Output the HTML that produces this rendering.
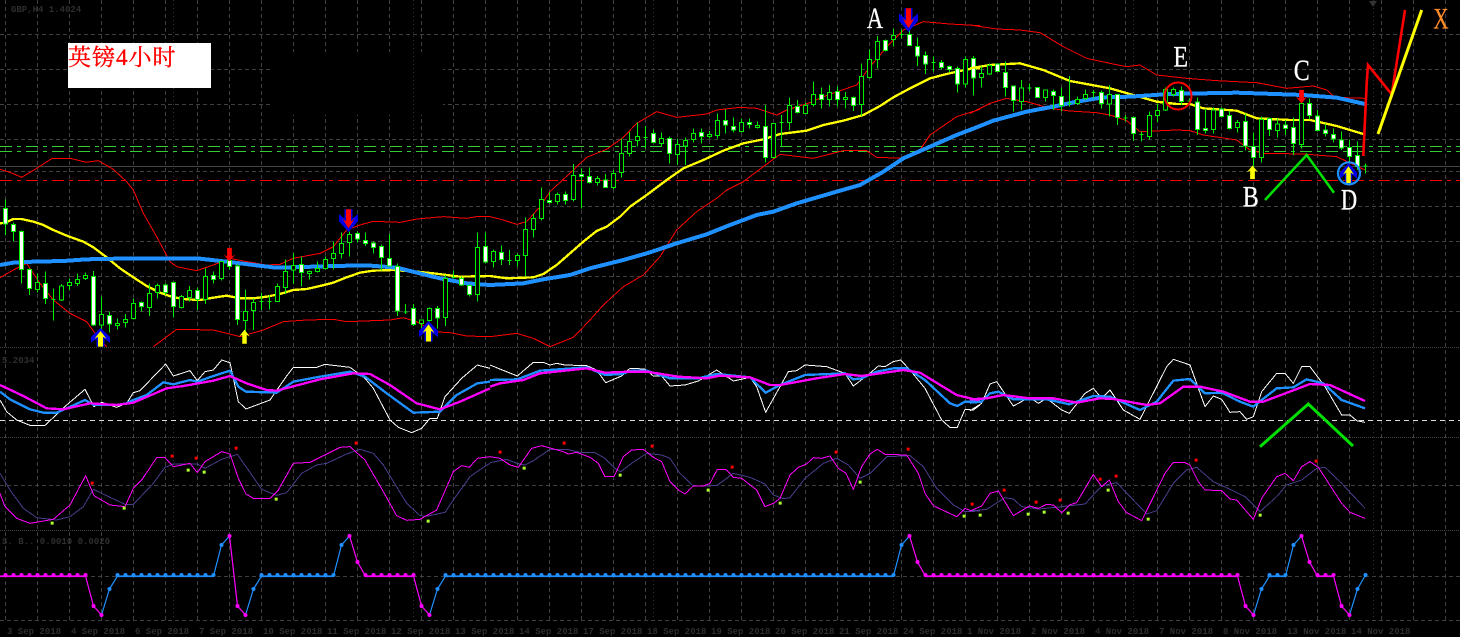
<!DOCTYPE html>
<html><head><meta charset="utf-8"><title>GBP H4</title>
<style>
html,body{margin:0;padding:0;background:#000;width:1460px;height:637px;overflow:hidden}
svg{display:block}
.n{fill:none;stroke-linejoin:round;shape-rendering:crispEdges}
.r{stroke:#f00;stroke-width:3}
.y{stroke:#ffff00;stroke-width:7}
.b{stroke:#1e90ff;stroke-width:12}
.w{stroke:#fff;stroke-width:3}
.bt{stroke:#1e90ff;stroke-width:7}
.m{stroke:#ff00ff;stroke-width:7}
.mt{stroke:#ff00ff;stroke-width:3}
.s{stroke:#483d8b;stroke-width:3}
.l{font:bold 9px "Liberation Mono",monospace;fill:#2e2e2e}
.t{font-family:"Liberation Serif",serif;font-size:30px;fill:#fff;text-anchor:middle;stroke:#fff;stroke-width:.3}
</style></head>
<body>
<svg width="1460" height="637" viewBox="0 0 1460 637" xmlns="http://www.w3.org/2000/svg">
<defs>
<pattern id="vg" x="5" y="0" width="32" height="7" patternUnits="userSpaceOnUse"><rect width="1" height="4" fill="#404040"/></pattern>
<g id="ub"><polygon fill="#0000e8" points="0,0 9.5,9 9.5,15 4,11 4,19 -4,19 -4,11 -9.5,15 -9.5,9"/></g>
<polygon id="uy" fill="#ffff00" points="0,3 6,11 2.5,9 2.5,19 -2.5,19 -2.5,9 -6,11"/>
<polygon id="ur" fill="#ff0000" points="0,3 6,11 2.5,9 2.5,19 -2.5,19 -2.5,9 -6,11"/>
</defs>
<rect width="1460" height="637" fill="#000"/>
<!-- grid -->
<rect x="0" y="0" width="1460" height="620" fill="url(#vg)"/>
<path d="M0 34.5H1460M0 69.5H1460M0 104.5H1460M0 139.5H1460M0 171.5H1460M0 206.5H1460M0 241.5H1460M0 276.5H1460M0 311.5H1460M0 485.5H1460M0 576.5H1460M0 620.5H1460" stroke="#404040" stroke-dasharray="4 3" fill="none"/>
<rect x="271" y="52" width="172" height="63" fill="#000"/>
<path d="M173.5 0V620M413.5 0V620M653.5 0V620M893.5 0V620M1133.5 0V620M1373.5 0V620" stroke="#333" stroke-dasharray="1 3" fill="none"/>
<path d="M0 347.5H1460M0 437.5H1460M0 530.5H1460" stroke="#444" stroke-dasharray="1 1" fill="none"/>
<!-- horizontal levels -->
<path d="M0 146.5H1460M0 151.5H1460" stroke="#32cd32" stroke-dasharray="12 5 4 5" fill="none"/>
<path d="M0 166.5H1460" stroke="#444" fill="none"/>
<path d="M0 180.5H1460" stroke="#f00" stroke-dasharray="12 5 4 5" fill="none"/>
<path d="M0 420.5H1460" stroke="#ddd" stroke-dasharray="5 4" fill="none"/>

<!-- top labels -->
<text class="l" x="11" y="12">GBP,H4 1.4024</text>
<text class="l" x="2" y="363">5.2034</text>
<text class="l" x="2" y="544">S. B.. 0.0010 0.0020</text>
<polygon points="1369,1 1377,1 1373,7" fill="#333"/>

<!-- main chart, zoom 1 -->
<g transform="scale(.33333)">
<clipPath id="c1"><rect x="0" y="0" width="1480" height="1042"/></clipPath>
<g clip-path="url(#c1)">
<polyline class="n r" points="0,508 30,517 65,532 110,505 155,476 210,475 260,487 295,482 340,508 380,545 400,570 430,640 470,710 510,785 530,800 590,812 640,795 690,775 740,785 800,795 840,793 880,775 960,760 1000,740 1040,690 1080,675 1120,664 1200,667 1250,657 1330,650 1400,655 1430,650 1470,650"/>
<polyline class="n r" points="0,833 40,810 80,790 120,850 160,900 210,940 260,965 300,1020 320,1040"/>
<polyline class="n r" points="460,1040 530,988 640,990 720,1010 790,990 850,965 920,960 1000,958 1040,965 1170,960 1210,953 1250,965 1300,995 1350,998 1400,1008 1470,1010"/>
</g>
<polyline class="n y" points="0,670 16,668 40,657 64,657 100,665 130,675 160,690 200,707 250,725 280,742 320,772 360,805 400,832 440,858 480,878 520,892 560,898 600,900 640,893 680,887 720,895 760,895 800,890 840,882 880,870 920,867 960,858 1000,848 1040,832 1080,818 1120,812 1180,810 1250,815 1300,820 1380,830 1470,828"/>
<polyline class="n b" points="0,795 40,788 100,785 190,783 260,778 400,775 600,776 680,785 760,795 820,802 880,802 1000,798 1100,796 1190,803 1250,818 1320,835 1400,850 1470,855"/>
<path fill="none" stroke="#00ee00" stroke-width="3" shape-rendering="crispEdges" d="M16.5 598V705M40.5 668V725M64.5 692V850M88.5 805V885M112.5 820V878M136.5 815V912M160.5 865V962M154 898h13M184.5 852V903M208.5 835V870M232.5 820V858M256.5 817V840M280.5 813V978M304.5 890V990M328.5 935V998M352.5 955V988M376.5 942V982M400.5 895V958M424.5 905V935M448.5 850V948M472.5 850V895M496.5 850V885M520.5 845V953M544.5 885V925M568.5 858V905M592.5 862V930M616.5 805V912M640.5 815V850M664.5 785V842M688.5 775V808M712.5 792V975M736.5 868V1018M760.5 895V990M784.5 878V930M778 905h13M808.5 885V928M802 905h13M832.5 850V905M856.5 778V882M880.5 760V852M904.5 770V860M928.5 812V838M952.5 785V818M976.5 770V808M1000.5 725V808M1024.5 697V775M1048.5 695V770M1072.5 695V728M1096.5 697V738M1120.5 725V760M1144.5 733V812M1168.5 702V800M1192.5 790V948M1216.5 912V942M1210 936h13M1240.5 912V978M1264.5 958V990M1288.5 922V965M1312.5 918V985M1336.5 825V978M1360.5 812V835M1354 833h13M1384.5 830V858M1408.5 853V890M1432.5 697V905M1456.5 698V790"/>
<path fill="#000" stroke="#00ee00" stroke-width="3" shape-rendering="crispEdges" d="M106.5 847h12v21h-12zM178.5 858h12v42h-12zM202.5 848h12v8h-12zM226.5 838h12v13h-12zM250.5 826h12v9h-12zM298.5 943h12v32h-12zM346.5 970h12v6h-12zM370.5 958h12v10h-12zM394.5 910h12v46h-12zM442.5 880h12v43h-12zM466.5 856h12v21h-12zM538.5 890h12v32h-12zM562.5 871h12v22h-12zM610.5 829h12v69h-12zM658.5 785h12v50h-12zM730.5 935h12v27h-12zM754.5 907h12v25h-12zM826.5 860h12v45h-12zM850.5 815h12v47h-12zM874.5 797h12v13h-12zM922.5 815h12v5h-12zM946.5 806h12v9h-12zM970.5 778h12v27h-12zM994.5 760h12v15h-12zM1018.5 730h12v30h-12zM1042.5 703h12v24h-12zM1258.5 960h12v10h-12zM1282.5 926h12v36h-12zM1330.5 836h12v116h-12zM1426.5 742h12v142h-12z"/>
<path fill="#fff" stroke="#00ee00" stroke-width="3" shape-rendering="crispEdges" d="M10.5 625h12v47h-12zM34.5 673h12v21h-12zM58.5 695h12v113h-12zM82.5 808h12v57h-12zM130.5 850h12v46h-12zM274.5 830h12v145h-12zM322.5 946h12v26h-12zM418.5 908h12v11h-12zM490.5 855h12v22h-12zM514.5 848h12v71h-12zM586.5 871h12v27h-12zM634.5 827h12v11h-12zM682.5 782h12v18h-12zM706.5 798h12v160h-12zM898.5 794h12v24h-12zM1066.5 701h12v16h-12zM1090.5 722h12v8h-12zM1114.5 729h12v13h-12zM1138.5 740h12v32h-12zM1162.5 776h12v22h-12zM1186.5 800h12v133h-12zM1234.5 926h12v47h-12zM1306.5 926h12v28h-12zM1378.5 836h12v19h-12zM1402.5 857h12v26h-12zM1450.5 740h12v46h-12z"/>
</g>

<!-- main chart, zoom 2 -->
<g transform="translate(490,0) scale(.33333)">
<polyline class="n r" points="0,650 40,660 80,673 110,665 150,620 180,575 250,510 290,472 350,448 400,412 440,370 500,335 560,352 650,342 680,330 750,322 800,325 860,345 890,330 960,308 1000,290 1100,255 1140,200 1200,130 1240,90 1300,65 1380,72 1470,77"/>
<polyline class="n r" points="0,1010 80,1000 130,1015 180,1040 250,1012 300,960 340,915 400,860 460,825 510,770 560,690 620,635 680,595 710,570 760,545 820,500 870,463 970,475 1060,452 1130,452 1160,472 1240,475 1290,450 1320,405 1400,350 1470,328"/>
<polyline class="n y" points="0,828 50,835 130,832 160,822 200,795 240,760 280,725 320,693 350,680 390,650 420,620 470,585 530,540 580,505 640,480 700,452 760,430 820,418 870,402 950,392 1000,375 1060,362 1120,345 1170,318 1210,292 1260,265 1320,235 1370,222 1400,215 1450,205 1470,205"/>
<polyline class="n b" points="0,855 100,850 160,838 240,825 300,805 400,780 480,757 560,730 650,703 720,675 800,645 850,635 920,610 1040,575 1110,555 1180,515 1240,475 1320,440 1400,405 1470,378"/>
<path fill="none" stroke="#00ee00" stroke-width="3" shape-rendering="crispEdges" d="M10.5 748V803M34.5 737V795M58.5 750V795M52 781h13M82.5 760V800M106.5 652V830M130.5 640V713M154.5 562V662M178.5 576V610M202.5 578V614M226.5 575V613M250.5 492V605M274.5 505V626M298.5 502V550M322.5 528V557M346.5 522V563M370.5 510V568M394.5 415V533M418.5 396V470M442.5 367V440M466.5 378V445M460 412h13M490.5 388V430M514.5 397V440M538.5 410V491M562.5 415V495M586.5 412V495M610.5 385V428M634.5 385V430M658.5 393V416M682.5 340V415M706.5 328V400M730.5 352V398M754.5 355V398M778.5 355V385M802.5 365V385M826.5 315V487M850.5 370V475M874.5 345V440M868 368h13M898.5 292V390M922.5 300V340M946.5 308V342M970.5 244V320M994.5 262V325M1018.5 255V320M1042.5 260V320M1066.5 276V325M1090.5 290V333M1114.5 190V348M1138.5 148V235M1162.5 108V205M1186.5 118V155M1210.5 85V140M1234.5 88V115M1228 103h13M1258.5 48V137M1282.5 113V198M1306.5 155V222M1330.5 170V215M1324 188h13M1354.5 180V208M1378.5 196V218M1402.5 200V278M1426.5 170V262M1450.5 168V287"/>
<path fill="#000" stroke="#00ee00" stroke-width="3" shape-rendering="crispEdges" d="M4.5 755h12v30h-12zM76.5 767h12v15h-12zM100.5 688h12v79h-12zM124.5 655h12v33h-12zM148.5 598h12v58h-12zM196.5 583h12v22h-12zM244.5 526h12v73h-12zM316.5 535h12v13h-12zM364.5 520h12v43h-12zM388.5 460h12v58h-12zM412.5 424h12v36h-12zM436.5 410h12v12h-12zM508.5 416h12v15h-12zM556.5 434h12v30h-12zM580.5 422h12v16h-12zM604.5 401h12v17h-12zM652.5 404h12v5h-12zM676.5 361h12v46h-12zM748.5 367h12v27h-12zM796.5 376h12v6h-12zM844.5 371h12v101h-12zM892.5 317h12v50h-12zM940.5 316h12v24h-12zM964.5 283h12v31h-12zM1012.5 278h12v20h-12zM1060.5 292h12v6h-12zM1108.5 230h12v83h-12zM1132.5 178h12v54h-12zM1156.5 124h12v54h-12zM1204.5 106h12v12h-12zM1420.5 178h12v74h-12z"/>
<path fill="#fff" stroke="#00ee00" stroke-width="3" shape-rendering="crispEdges" d="M28.5 758h12v20h-12zM172.5 601h12v6h-12zM220.5 583h12v18h-12zM268.5 524h12v5h-12zM292.5 530h12v18h-12zM340.5 540h12v22h-12zM484.5 401h12v27h-12zM532.5 416h12v44h-12zM628.5 398h12v11h-12zM700.5 362h12v13h-12zM724.5 380h12v10h-12zM772.5 368h12v5h-12zM820.5 380h12v92h-12zM916.5 320h12v17h-12zM988.5 284h12v14h-12zM1036.5 274h12v24h-12zM1084.5 292h12v24h-12zM1180.5 121h12v31h-12zM1252.5 103h12v33h-12zM1276.5 140h12v28h-12zM1300.5 166h12v26h-12zM1348.5 187h12v15h-12zM1372.5 200h12v8h-12zM1396.5 206h12v46h-12zM1444.5 175h12v59h-12z"/>
</g>

<!-- main chart, zoom 3 -->
<g transform="translate(970,0) scale(.33333)">
<polyline class="n r" points="0,75 80,87 150,90 210,98 280,140 350,175 420,190 470,200 510,195 560,225 650,235 740,242 860,248 950,265 1030,258 1070,270 1095,292 1185,295"/>
<polyline class="n r" points="0,340 60,310 110,295 170,305 240,325 300,333 380,338 420,345 470,362 510,395 620,390 660,392 700,405 800,420 840,450 880,460 1000,462 1100,470 1185,510"/>
<polyline class="n y" points="0,205 60,195 150,190 220,210 300,243 420,265 490,285 560,305 620,312 660,312 700,325 800,332 860,355 960,360 1020,360 1100,378 1180,402"/>
<polyline class="n b" points="0,390 70,362 170,335 260,318 320,305 400,292 480,290 600,282 800,278 1000,285 1100,293 1185,312"/>
<path fill="none" stroke="#00ee00" stroke-width="3" shape-rendering="crispEdges" d="M34.5 200V262M58.5 190V225M82.5 190V215M106.5 185V290M130.5 258V335M154.5 240V330M178.5 250V275M172 264h13M202.5 262V294M226.5 268V305M250.5 268V330M274.5 262V335M298.5 228V320M292 311h13M322.5 290V315M346.5 268V300M370.5 270V295M364 277h13M394.5 272V326M418.5 255V350M442.5 283V375M466.5 345V365M460 354h13M490.5 350V423M514.5 395V425M508 404h13M538.5 335V418M562.5 310V366M586.5 262V333M610.5 262V290M634.5 260V315M658.5 295V310M652 303h13M682.5 292V405M706.5 327V400M730.5 322V400M754.5 322V352M778.5 333V388M802.5 360V398M826.5 340V452M850.5 398V500M874.5 350V488M898.5 352V408M922.5 355V412M946.5 360V405M970.5 352V465M994.5 290V445M1018.5 295V358M1042.5 330V395M1066.5 370V410M1090.5 385V428M1114.5 395V450M1138.5 418V490M1162.5 425V510M1186.5 490V520M1180 498h13"/>
<path fill="#000" stroke="#00ee00" stroke-width="3" shape-rendering="crispEdges" d="M28.5 220h12v13h-12zM52.5 196h12v26h-12zM148.5 264h12v41h-12zM220.5 270h12v22h-12zM316.5 298h12v12h-12zM340.5 283h12v13h-12zM412.5 284h12v28h-12zM532.5 346h12v64h-12zM556.5 332h12v15h-12zM580.5 268h12v62h-12zM604.5 268h12v15h-12zM724.5 330h12v58h-12zM796.5 368h12v14h-12zM868.5 358h12v114h-12zM916.5 372h12v20h-12zM988.5 310h12v124h-12z"/>
<path fill="#fff" stroke="#00ee00" stroke-width="3" shape-rendering="crispEdges" d="M76.5 192h12v22h-12zM100.5 217h12v45h-12zM124.5 258h12v44h-12zM196.5 263h12v29h-12zM244.5 275h12v11h-12zM268.5 290h12v26h-12zM388.5 278h12v32h-12zM436.5 284h12v68h-12zM484.5 353h12v47h-12zM628.5 272h12v32h-12zM676.5 306h12v82h-12zM700.5 385h12v6h-12zM748.5 327h12v23h-12zM772.5 347h12v39h-12zM820.5 365h12v73h-12zM844.5 440h12v32h-12zM892.5 356h12v32h-12zM940.5 375h12v10h-12zM964.5 382h12v48h-12zM1012.5 310h12v36h-12zM1036.5 348h12v44h-12zM1060.5 390h12v10h-12zM1084.5 403h12v14h-12zM1108.5 420h12v24h-12zM1132.5 442h12v28h-12zM1156.5 466h12v34h-12z"/>
</g>

<!-- arrows -->
<g transform="translate(100.5,328) scale(1,.98)"><use href="#ub"/><use href="#uy"/></g>
<g transform="translate(244.5,327) scale(.9,.88)"><use href="#uy"/></g>
<g transform="translate(428.5,321) scale(1,1.08)"><use href="#ub"/><use href="#uy"/></g>
<g transform="translate(348.5,232) scale(1,-1.2)"><use href="#ub"/><use href="#ur"/></g>
<g transform="translate(229.5,264) scale(.95,-.85)"><use href="#ur"/></g>
<g transform="translate(908.5,32) scale(1,-1.25)"><use href="#ub"/><use href="#ur"/></g>
<g transform="translate(1252.5,163) scale(.95,.85)"><use href="#uy"/></g>
<g transform="translate(1301.5,106) scale(.95,-.85)"><use href="#ur"/></g>
<g transform="translate(1348.5,163) scale(.9,1.05)"><use href="#ub"/><use href="#uy"/></g>

<!-- annotations -->
<circle cx="1178" cy="96" r="13.5" fill="none" stroke="#f00" stroke-width="2"/>
<circle cx="1349" cy="173.3" r="11" fill="none" stroke="#1e90ff" stroke-width="2.2"/>
<polyline fill="none" stroke="#00e000" stroke-width="2.6" points="1265,200 1306.7,155 1334,192.7"/>
<polyline fill="none" stroke="#f00" stroke-width="2.6" points="1363.3,156 1366.7,83 1368,65 1391.7,94.3 1405,10"/>
<polyline fill="none" stroke="#ffff00" stroke-width="3" points="1378,134 1421.7,10"/>
<text class="t" transform="translate(875,28) scale(.75,1)" x="0" y="0">A</text>
<text class="t" transform="translate(1180.7,66.7) scale(.8,1)" x="0" y="0">E</text>
<text class="t" transform="translate(1301.7,80) scale(.8,1)" x="0" y="0">C</text>
<text class="t" transform="translate(1250.7,206.7) scale(.8,1)" x="0" y="0">B</text>
<text class="t" transform="translate(1349,209.3) scale(.75,1)" x="0" y="0">D</text>
<text class="t" style="fill:#ff8c2a;stroke:#ff8c2a" transform="translate(1441,28.3) scale(.7,1)" x="0" y="0">X</text>

<!-- title box -->
<rect x="68" y="43" width="143" height="45" fill="#fff"/>
<text x="68" y="65" fill="#f00" stroke="#f00" stroke-width=".35" style="font-family:'Liberation Serif','Noto Serif CJK SC',serif;font-size:23px;letter-spacing:1px">英镑4小时</text>

<!-- indicator 1,2 zoom 4 -->
<g transform="translate(0,350) scale(.33333)">
<polyline class="n w" points="0,150 20,185 50,210 90,226 135,226 200,165 255,118 282,170 305,157 350,172 380,160 400,128 420,122 497,42 520,78 570,62 592,92 615,65 640,60 665,30 690,38 715,155 738,177 810,150 860,78 880,52 950,52 975,43 1050,52 1095,85 1120,115 1170,210 1195,232 1235,248 1265,235 1290,205 1312,205 1335,140 1385,85 1432,45 1470,55"/>
<polyline class="n bt" points="0,125 30,148 90,178 130,188 170,188 200,175 255,150 282,165 350,165 380,160 400,150 440,135 490,97 520,103 570,90 592,95 640,78 690,62 715,110 738,125 830,128 880,95 960,80 1050,65 1095,80 1160,130 1240,188 1320,185 1370,135 1432,100 1470,95"/>
<polyline class="n m" points="0,105 70,138 140,175 190,178 270,160 350,165 400,158 500,115 550,108 640,92 690,78 740,100 800,120 830,122 960,88 1060,70 1110,72 1170,105 1250,160 1320,178 1380,155 1470,115"/>
<polyline class="n s" points="0,370 30,420 70,475 110,503 170,510 210,500 250,470 280,418 330,442 375,463 400,463 460,400 495,352 520,342 592,342 615,355 665,328 712,313 745,360 785,418 830,436 860,428 905,370 950,345 980,340 1040,312 1080,298 1120,310 1150,345 1220,460 1260,497 1285,498 1335,487 1360,450 1410,380 1450,352 1470,340"/>
<polyline class="n mt" points="0,430 15,470 50,505 90,520 160,508 210,465 257,377 282,437 330,465 375,470 400,415 425,390 470,323 495,323 520,350 570,340 592,368 615,335 665,305 690,312 715,385 738,432 760,445 810,445 835,420 880,340 930,337 1020,292 1050,290 1095,330 1150,425 1190,497 1220,511 1260,508 1310,480 1360,365 1385,347 1408,352 1432,325 1470,320"/>
<path fill="#f00" d="M272 395h9v9h-9zM512 314h9v9h-9zM584 320h9v9h-9zM704 290h9v9h-9zM1064 275h9v9h-9z"/>
<path fill="#adff2f" d="M152 515h9v9h-9zM368 470h9v9h-9zM560 356h9v9h-9zM608 362h9v9h-9zM824 443h9v9h-9zM1280 509h9v9h-9z"/>
</g>
<!-- zoom 5 -->
<g transform="translate(490,350) scale(.33333)">
<polyline class="n w" points="0,45 82,78 130,37 160,37 180,45 200,40 225,45 290,47 320,60 347,98 395,78 420,55 465,57 490,78 515,78 540,108 585,105 625,93 680,60 730,93 780,82 800,110 827,187 870,110 895,65 920,62 945,45 1010,50 1065,70 1090,108 1140,70 1165,48 1185,50 1210,35 1232,30 1260,60 1305,115 1355,210 1380,232 1402,232 1425,178 1450,180 1470,165"/>
<polyline class="n bt" points="0,90 82,88 150,62 290,52 345,75 395,72 425,62 470,62 540,85 625,85 680,72 780,82 827,128 870,105 945,75 1065,70 1090,88 1115,85 1160,65 1210,55 1250,55 1305,90 1380,160 1402,168 1425,155 1470,155"/>
<polyline class="n m" points="0,110 30,100 100,90 150,70 290,55 345,68 420,65 470,65 565,80 650,85 690,77 780,82 840,105 870,105 980,85 1065,72 1115,78 1240,60 1290,68 1400,135 1470,152"/>
<polyline class="n s" points="0,338 50,328 80,340 105,345 130,332 180,298 230,298 270,307 315,308 345,325 375,355 392,365 425,340 470,310 515,315 540,325 570,370 610,408 680,407 730,370 780,382 825,402 850,435 880,446 900,443 945,385 1000,340 1040,325 1075,345 1110,385 1140,370 1190,320 1260,317 1300,350 1340,415 1390,465 1425,485 1470,483"/>
<polyline class="n mt" points="0,320 30,325 60,345 85,352 125,295 155,287 220,305 235,312 260,307 300,322 325,340 345,380 372,380 400,320 425,300 460,298 490,322 515,335 540,395 565,420 585,432 610,408 640,408 660,400 682,358 708,358 730,382 755,385 800,420 825,470 850,460 870,445 900,375 925,352 950,342 970,323 995,325 1020,318 1045,355 1068,370 1090,418 1115,350 1140,312 1162,298 1185,313 1250,315 1285,370 1305,430 1330,467 1400,500 1425,475 1445,483 1470,480"/>
<path fill="#f00" d="M26 302h9v9h-9zM218 275h9v9h-9zM482 284h9v9h-9zM722 347h9v9h-9zM1034 302h9v9h-9zM1250 293h9v9h-9zM1442 458h9v9h-9z"/>
<path fill="#adff2f" d="M98 350h9v9h-9zM386 371h9v9h-9zM650 416h9v9h-9zM866 455h9v9h-9zM1106 392h9v9h-9zM1418 494h9v9h-9z"/>
</g>
<!-- zoom 6 -->
<g transform="translate(970,350) scale(.33333)">
<polyline class="n w" points="0,182 35,160 60,102 80,95 130,168 178,142 205,160 230,145 275,180 298,190 345,130 370,115 395,145 420,120 460,180 510,208 590,50 610,28 660,45 705,170 730,138 755,148 780,187 810,185 830,208 850,200 875,125 920,70 945,70 970,100 995,50 1020,50 1065,110 1115,195 1140,195 1160,212 1185,217"/>
<polyline class="n bt" points="0,158 35,155 60,130 85,125 130,148 178,148 230,148 298,163 370,138 420,140 510,180 560,155 610,92 660,87 705,130 755,128 810,155 850,170 875,150 920,115 970,112 1010,88 1060,100 1115,150 1185,175"/>
<polyline class="n m" points="0,148 50,145 100,135 178,145 250,145 320,158 390,145 430,147 530,165 570,160 640,110 690,110 760,125 840,155 880,155 1020,102 1080,105 1185,153"/>
<polyline class="n s" points="0,483 50,478 105,443 130,447 155,470 205,477 275,470 345,462 395,408 440,398 490,450 530,492 560,482 610,400 650,360 680,352 730,395 780,418 825,440 870,485 920,440 950,405 995,390 1040,355 1065,352 1115,400 1185,475"/>
<polyline class="n mt" points="0,483 35,468 60,430 85,423 130,497 178,468 205,475 230,463 250,465 275,488 298,465 320,458 370,373 395,410 418,390 445,455 470,488 515,512 585,370 610,337 645,338 660,345 685,395 705,420 755,422 780,447 800,450 850,508 875,445 920,380 945,370 970,392 995,350 1020,335 1045,352 1115,460 1140,487 1185,505"/>
<path fill="#f00" d="M98 416h9v9h-9zM194 452h9v9h-9zM266 446h9v9h-9zM386 383h9v9h-9zM434 374h9v9h-9zM674 326h9v9h-9zM1034 329h9v9h-9z"/>
<path fill="#adff2f" d="M26 491h9v9h-9zM170 488h9v9h-9zM218 482h9v9h-9zM290 485h9v9h-9zM410 416h9v9h-9zM530 503h9v9h-9zM866 491h9v9h-9z"/>
</g>
<polyline fill="none" stroke="#00e000" stroke-width="3" points="1260,446.7 1308.3,404 1353,446"/>

<!-- indicator 3 -->
<g fill="none" stroke-width="1.2">
<g stroke="#ff00ff">
<polyline points="0,576 85.5,576 93.5,606 101.5,615"/>
<polyline points="229.5,536 237.5,606 245.5,615"/>
<polyline points="349.5,536 357.5,562 365.5,576 413.5,576 421.5,606 429.5,615"/>
<polyline points="909.5,536 917.5,562 925.5,576 1237.5,576 1245.5,606 1253.5,615"/>
<polyline points="1301.5,536 1309.5,562 1317.5,576 1333.5,576 1341.5,606 1349.5,615"/>
</g>
<g stroke="#1e90ff">
<polyline points="101.5,615 109.5,589 117.5,576 213.5,576 221.5,545 229.5,536"/>
<polyline points="245.5,615 253.5,589 261.5,576 333.5,576 341.5,545 349.5,536"/>
<polyline points="429.5,615 437.5,589 445.5,576 893.5,576 901.5,545 909.5,536"/>
<polyline points="1253.5,615 1261.5,589 1269.5,576 1285.5,576 1293.5,545 1301.5,536"/>
<polyline points="1349.5,615 1357.5,589 1365.5,575"/>
</g>
</g>
<path fill="none" stroke="#ff00ff" stroke-width="1.6" d="M0 576.3H85M365 576.3H413M925 576.3H1237M1317 576.3H1333"/>
<path fill="none" stroke="#1e90ff" stroke-width="1.6" d="M117 576.3H213M261 576.3H333M445 576.3H893M1269 576.3H1285"/>
<g fill="none" stroke-width="4" stroke-linecap="round" stroke-dasharray="0 8">
<path stroke="#ff00ff" d="M5.5 575H90M365.5 575H416M925.5 575H1240M1317.5 575H1336"/>
<path stroke="#1e90ff" d="M117.5 575H216M261.5 575H336M445.5 575H896M1269.5 575H1288"/>
</g>
<g fill="#ff00ff">
<circle cx="93.5" cy="606" r="2"/><circle cx="101.5" cy="615" r="2"/><circle cx="229.5" cy="536" r="2"/><circle cx="237.5" cy="606" r="2"/><circle cx="245.5" cy="615" r="2"/><circle cx="349.5" cy="536" r="2"/><circle cx="357.5" cy="562" r="2"/><circle cx="421.5" cy="606" r="2"/><circle cx="429.5" cy="615" r="2"/><circle cx="909.5" cy="536" r="2"/><circle cx="917.5" cy="562" r="2"/><circle cx="1245.5" cy="606" r="2"/><circle cx="1253.5" cy="615" r="2"/><circle cx="1301.5" cy="536" r="2"/><circle cx="1309.5" cy="562" r="2"/><circle cx="1341.5" cy="606" r="2"/><circle cx="1349.5" cy="615" r="2"/>
</g>
<g fill="#1e90ff">
<circle cx="109.5" cy="589" r="2"/><circle cx="221.5" cy="545" r="2"/><circle cx="253.5" cy="589" r="2"/><circle cx="341.5" cy="545" r="2"/><circle cx="437.5" cy="589" r="2"/><circle cx="901.5" cy="545" r="2"/><circle cx="1261.5" cy="589" r="2"/><circle cx="1293.5" cy="545" r="2"/><circle cx="1357.5" cy="589" r="2"/><circle cx="1365.5" cy="575" r="2"/>
</g>

<!-- time axis -->
<g class="l">
<text class="l" x="7" y="634">3 Sep 2018</text><text class="l" x="71" y="634">4 Sep 2018</text><text class="l" x="135" y="634">6 Sep 2018</text><text class="l" x="199" y="634">7 Sep 2018</text><text class="l" x="263" y="634">10 Sep 2018</text><text class="l" x="327" y="634">11 Sep 2018</text><text class="l" x="391" y="634">12 Sep 2018</text><text class="l" x="455" y="634">13 Sep 2018</text><text class="l" x="519" y="634">14 Sep 2018</text><text class="l" x="583" y="634">17 Sep 2018</text><text class="l" x="647" y="634">18 Sep 2018</text><text class="l" x="711" y="634">19 Sep 2018</text><text class="l" x="775" y="634">20 Sep 2018</text><text class="l" x="839" y="634">21 Sep 2018</text><text class="l" x="903" y="634">24 Sep 2018</text><text class="l" x="967" y="634">1 Nov 2018</text><text class="l" x="1031" y="634">2 Nov 2018</text><text class="l" x="1095" y="634">4 Nov 2018</text><text class="l" x="1159" y="634">7 Nov 2018</text><text class="l" x="1223" y="634">8 Nov 2018</text><text class="l" x="1287" y="634">13 Nov 2018</text><text class="l" x="1351" y="634">14 Nov 2018</text>
</g>
</svg>
</body></html>
